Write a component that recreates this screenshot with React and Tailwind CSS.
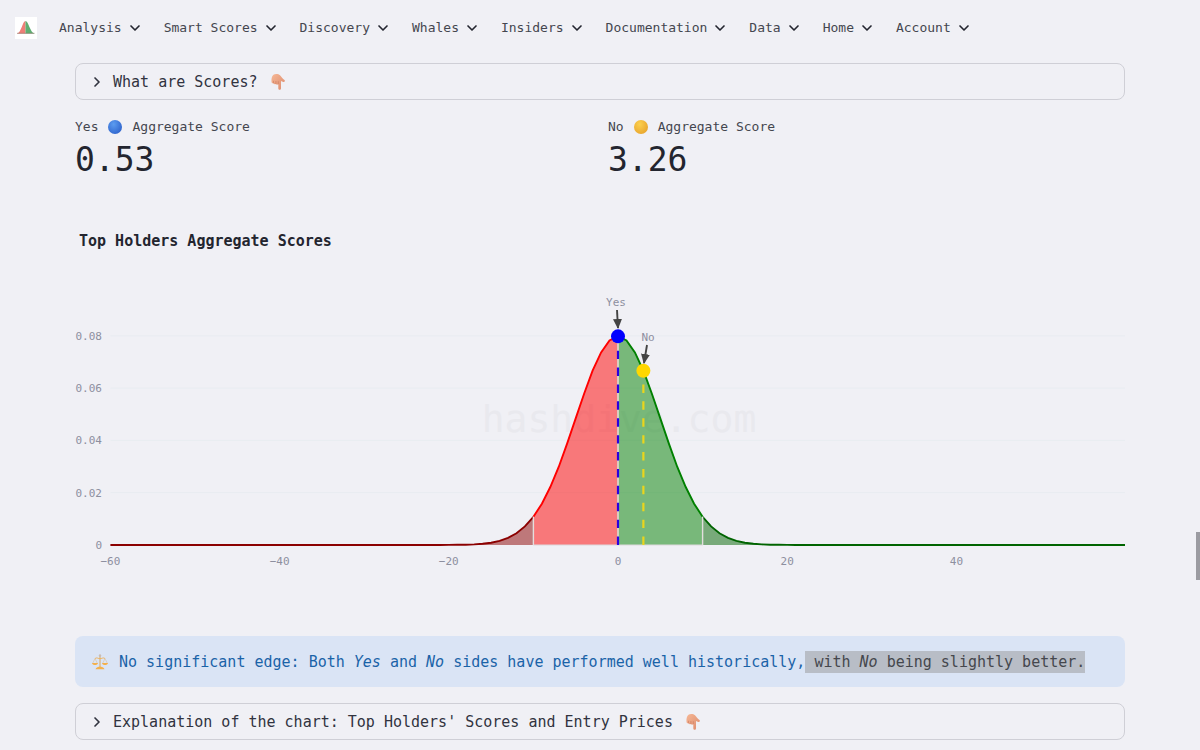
import { useState } from "react";
import { ChevronDown, ChevronRight } from "lucide-react";

const menus = [
  "Analysis",
  "Smart Scores",
  "Discovery",
  "Whales",
  "Insiders",
  "Documentation",
  "Data",
  "Home",
  "Account",
];

// chart geometry, in viewBox units
const ZERO_X = 543;
const UNIT_X = 8.46;
const BASE_Y = 265;
const UNIT_Y = 2615;

const toX = (v) => ZERO_X + v * UNIT_X;
const toY = (p) => BASE_Y - p * UNIT_Y;

// normal curve with a standard deviation of 5
const density = (v) =>
  Math.exp(-(v * v) / 50) / (5 * Math.sqrt(2 * Math.PI));

const curve = (from, to) => {
  const points = [];
  for (let v = from; v <= to; v++) {
    points.push(`${toX(v).toFixed(1)},${toY(density(v)).toFixed(1)}`);
  }
  return points.join(" ");
};

const bands = [
  { from: -60, to: -10, color: "#8b0000" },
  { from: -10, to: 0, color: "#ff0000" },
  { from: 0, to: 10, color: "#008000" },
  { from: 10, to: 60, color: "#006400" },
];

function Logo() {
  return (
    <svg viewBox="0 0 22 22" className="size-[22px]" aria-hidden="true">
      <rect width="22" height="22" fill="#fff" />
      <path d="M2 16.500C6.500 15.500 7.500 4 10.500 4V16.500Z" fill="#ee7f78" />
      <path d="M10.500 4C13.500 4 15 15.500 19.500 16.500H10.500Z" fill="#5fae72" />
      <path d="M2 16.300H19.500" stroke="#8a6f62" strokeWidth="0.600" />
    </svg>
  );
}

function PointDown() {
  return (
    <svg viewBox="0 0 18 18" className="size-[18px]" aria-hidden="true">
      <defs>
        <linearGradient id="skin" x1="0" y1="0" x2="1" y2="1">
          <stop offset="0" stopColor="#f6b795" />
          <stop offset="1" stopColor="#dc8a6c" />
        </linearGradient>
      </defs>
      <path
        d="M4.500 1.800C6 .6 9.500 .8 11 2.200C12.500 3.800 13.500 5.500 15.500 7C16.500 7.900 15.600 9.400 14.300 9C13.400 8.700 12.700 8.200 12 8V15.300C12 17.300 9.300 17.300 9.300 15.300V11.200C8.500 11.900 7.300 11.800 6.900 11C6 11.600 4.800 11.200 4.500 10.300C3.300 10.600 2.400 9.700 2.500 8.500C2.300 6 2.700 3.200 4.500 1.800Z"
        fill="url(#skin)"
      />
      <path
        d="M4.500 10.300V7.800M6.900 11V8M9.300 11.200V8.200"
        stroke="#cb7b60"
        strokeWidth="0.600"
        fill="none"
      />
    </svg>
  );
}

function Scales() {
  return (
    <svg viewBox="0 0 18 18" className="size-[18px]" fill="none" aria-hidden="true">
      <path d="M9 2.500V14" stroke="#d9b98c" strokeWidth="1.400" />
      <circle cx="9" cy="2.500" r="1.200" fill="#c9bdb5" />
      <path d="M4 5.500C6 4 7.500 6 9 5.500C10.500 6 12 4 14 5.500" stroke="#efb45f" strokeWidth="1" />
      <path d="M4 5.500L1.800 10M4 5.500L6.200 10M14 5.500L11.800 10M14 5.500L16.200 10" stroke="#dcbf9b" strokeWidth="0.600" />
      <path d="M1 10H7C6.700 12.800 1.300 12.800 1 10ZM11 10H17C16.700 12.800 11.300 12.800 11 10Z" fill="#f4b04c" />
      <path d="M4.500 16.300C5 14.300 7.500 14 9 13.500C10.500 14 13 14.300 13.500 16.300Z" fill="#f4b04c" />
    </svg>
  );
}

function Dot({ className }) {
  return (
    <span
      className={`size-[14px] rounded-full bg-radial-[at_40%_30%] ${className}`}
    />
  );
}

function Expander({ label, className = "" }) {
  const [open, setOpen] = useState(false);

  return (
    <button
      type="button"
      aria-expanded={open}
      onClick={() => setOpen(!open)}
      className={`flex h-[37px] w-full items-center gap-2 rounded-lg border border-[#cfcfd6] px-[13px] text-[15px] leading-[22px] text-[#31333f] ${className}`}
    >
      <ChevronRight className="size-4" strokeWidth={2.5} />
      <span className="flex items-center gap-[11px]">
        {label}
        <PointDown />
      </span>
    </button>
  );
}

function Metric({ side, dot, value }) {
  return (
    <div>
      <div className="flex items-center gap-[10px] text-[13px] leading-[22px] text-[#44464f]">
        <span>{side}</span>
        <Dot className={dot} />
        <span>Aggregate Score</span>
      </div>
      <div className="text-[33px] leading-[44px] text-[#23252f]">{value}</div>
    </div>
  );
}

function ScoreChart() {
  return (
    <svg
      viewBox="0 0 1050 300"
      className="mt-7 block h-auto w-full"
      role="img"
      aria-label="Top Holders Aggregate Scores"
    >
      <defs>
        <marker
          id="arrow"
          viewBox="0 0 10 10"
          refX="9"
          refY="5"
          markerWidth="10"
          markerHeight="10"
          markerUnits="userSpaceOnUse"
          orient="auto"
        >
          <path d="M0 .5L10 5L0 9.500Z" fill="#444" />
        </marker>
      </defs>

      {[0.02, 0.04, 0.06, 0.08].map((p) => (
        <line key={p} x1="35.500" x2="1050" y1={toY(p)} y2={toY(p)} stroke="#e8ecf1" />
      ))}

      <text x="544" y="152" textAnchor="middle" fill="#e9e9ee" className="text-[38px]">
        hashdive.com
      </text>

      {bands.map((b) => (
        <g key={b.from}>
          <polygon
            points={`${toX(b.from)},${BASE_Y} ${curve(b.from, b.to)} ${toX(b.to)},${BASE_Y}`}
            fill={b.color}
            fillOpacity="0.5"
          />
          <polyline
            points={curve(b.from, b.to)}
            fill="none"
            stroke={b.color}
            strokeWidth="1.900"
          />
        </g>
      ))}

      {[-10, 10].map((v) => (
        <line key={v} x1={toX(v)} x2={toX(v)} y1={toY(density(v))} y2={BASE_Y} stroke="#e3dede" strokeWidth="1.400" />
      ))}
      <line x1={toX(-10)} x2={toX(10)} y1={BASE_Y} y2={BASE_Y} stroke="#dcd8dc" />

      {/* average score of each side */}
      <line x1={toX(0)} x2={toX(0)} y1={BASE_Y} y2={toY(density(0))} stroke="#dccfc4" strokeWidth="1.900" />
      <line x1={toX(0)} x2={toX(0)} y1={BASE_Y} y2={toY(density(0))} stroke="#2a00e0" strokeWidth="2.200" strokeDasharray="8.450" />
      <line x1={toX(3)} x2={toX(3)} y1={BASE_Y} y2={toY(density(3))} stroke="#ead51c" strokeWidth="2.200" strokeDasharray="8.450" />
      <circle cx={toX(0)} cy={toY(density(0))} r="7" fill="#0000ff" />
      <circle cx={toX(3)} cy={toY(density(3))} r="7" fill="#ffd700" />

      <path d="M542 30L543 48" stroke="#444" strokeWidth="1.900" markerEnd="url(#arrow)" />
      <path d="M572 65L569 83" stroke="#444" strokeWidth="1.900" markerEnd="url(#arrow)" />

      <g fill="#8d8f9f" className="text-[11px]">
        <text x="541" y="26" textAnchor="middle">Yes</text>
        <text x="573" y="61" textAnchor="middle">No</text>
        {[0, 0.02, 0.04, 0.06, 0.08].map((p) => (
          <text key={p} x="27" y={toY(p) + 4} textAnchor="end">{p}</text>
        ))}
        {[-60, -40, -20, 0, 20, 40].map((v) => (
          <text key={v} x={toX(v)} y="285" textAnchor="middle">
            {String(v).replace("-", "−")}
          </text>
        ))}
      </g>
    </svg>
  );
}

export default function App() {
  return (
    <div className="relative min-h-screen bg-[#f0f0f5] font-['DejaVu_Sans_Mono',monospace]">
      <header className="flex h-14 items-center pl-[15px]">
        <a href="#" aria-label="Home page">
          <Logo />
        </a>
        <nav className="ml-[22px] flex gap-[21px]">
          {menus.map((name) => (
            <button
              key={name}
              type="button"
              className="flex items-center gap-[5px] text-[13px] leading-[22px] whitespace-nowrap text-[#44464f]"
            >
              {name}
              <ChevronDown className="size-4 text-[#23252f]" strokeWidth={2.5} />
            </button>
          ))}
        </nav>
      </header>

      <main className="px-[75px] pt-[7px] pb-[10px]">
        <Expander label="What are Scores?" />

        <section className="mt-4 grid grid-cols-2 gap-4">
          <Metric side="Yes" dot="from-[#5b9cf0] to-[#2456c4]" value="0.53" />
          <Metric side="No" dot="from-[#fcd04e] to-[#e39a25]" value="3.26" />
        </section>

        <h2 className="mt-12 pl-1 text-[15px] leading-[22px] font-bold text-[#23252f]">
          Top Holders Aggregate Scores
        </h2>
        <ScoreChart />

        <div className="mt-14 flex min-h-[51px] items-center gap-[10px] rounded-lg bg-[#dae4f5] px-4 text-[15px] leading-[22px] text-[#1a63a8]">
          <Scales />
          <p>
            No significant edge: Both <em>Yes</em> and <em>No</em> sides have
            performed well historically,
            <mark className="inline-block bg-[#b8bdc6] whitespace-pre text-[#45474d]">
              {" "}with <em>No</em> being slightly better.
            </mark>
          </p>
        </div>

        <Expander
          className="mt-4"
          label="Explanation of the chart: Top Holders' Scores and Entry Prices"
        />
      </main>

      {/* scroll thumb */}
      <div className="absolute top-[532px] right-0 h-12 w-1 bg-[#9b9ba1]" />
    </div>
  );
}
